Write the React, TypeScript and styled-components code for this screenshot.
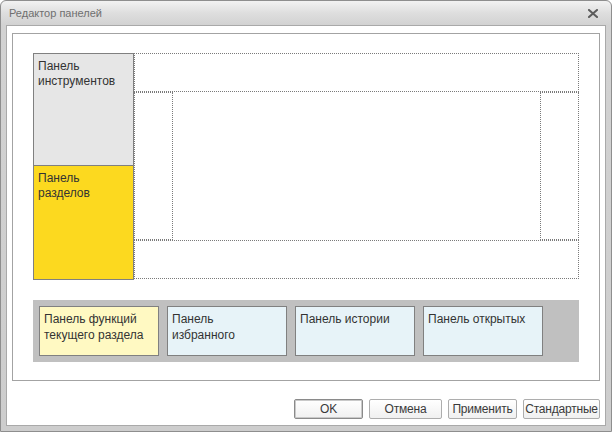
import React, { FunctionComponent } from 'react';
import styled, { createGlobalStyle } from 'styled-components';

/*
 * Styles
 */
const GlobalStyle = createGlobalStyle`
  html, body {
    margin: 0;
    padding: 0;
    background: #ffffff;
  }
  * {
    box-sizing: border-box;
  }
`;

const Window = styled.div`
  width: 612px;
  height: 432px;
  display: flex;
  flex-direction: column;
  padding: 0 5px 5px 5px;
  border: 1px solid #8e8e8e;
  border-radius: 6px 6px 0 0;
  background: linear-gradient(#f2f2f2 0px, #dedede 12px, #d2d2d2 24px, #cdcdcd 100%);
  font-family: "Liberation Sans", Arial, sans-serif;
`;

const TitleBar = styled.div`
  height: 24px;
  flex: none;
  display: flex;
  align-items: center;
  justify-content: space-between;
  padding: 0 8px 0 3px;
`;

const Title = styled.span`
  font-size: 11px;
  color: #6f6f6f;
`;

const Client = styled.div`
  flex: 1;
  display: flex;
  flex-direction: column;
  background: #ffffff;
  border: 1px solid #a9a9a9;
  padding: 7px 5px 0 5px;
`;

const EditorBox = styled.div`
  height: 348px;
  flex: none;
  border: 1px solid #a3a3a3;
  padding: 19px 20px 0 20px;
`;

const Diagram = styled.div`
  display: flex;
  height: 227px;
`;

const SideColumn = styled.div`
  width: 101px;
  flex: none;
  display: flex;
  flex-direction: column;
  border: 1px solid #808080;
`;

const SidePanel = styled.div<{ $bg: string; $size: number }>`
  height: ${(p) => p.$size}px;
  flex: none;
  background: ${(p) => p.$bg};
  padding: 5px 4px;
  font-size: 12px;
  line-height: 15px;
  color: #333333;
  & + & {
    border-top: 1px solid #808080;
    flex: 1;
  }
`;

const Area = styled.div`
  flex: 1;
  display: grid;
  grid-template-columns: 39px 1fr 39px;
  grid-template-rows: 39px 148px 39px;
`;

const Dotted = styled.div<{ $area: string }>`
  grid-area: ${(p) => p.$area};
  border: 1px dotted #7a7a7a;
`;

const Strip = styled.div`
  margin-top: 20px;
  height: 62px;
  background: #c0c0c0;
  padding: 6px;
  display: flex;
  gap: 8px;
`;

const Card = styled.div<{ $bg: string }>`
  width: 120px;
  height: 50px;
  border: 1px solid #808080;
  background: ${(p) => p.$bg};
  padding: 4px 4px;
  font-size: 12px;
  line-height: 16px;
  color: #333333;
`;

const Footer = styled.div`
  flex: 1;
  display: flex;
  justify-content: flex-end;
  align-items: flex-start;
  gap: 6px;
  padding: 18px 0 0 0;
`;

const Button = styled.button<{ $width: number; $default?: boolean }>`
  width: ${(p) => p.$width}px;
  height: 20px;
  padding: 0;
  font-family: "Liberation Sans", Arial, sans-serif;
  font-size: 12px;
  letter-spacing: -0.2px;
  color: #3a3a3a;
  background: linear-gradient(#ffffff, #f0f0f0);
  border: 1px solid ${(p) => (p.$default ? '#8a8a8a' : '#adadad')};
  box-shadow: ${(p) => (p.$default ? 'inset 0 0 0 1px #c9c9c9' : 'none')};
  border-radius: 2px;
`;

/*
 * Components
 */
const CloseIcon = () => (
  <svg width="10" height="9" viewBox="0 0 10 9">
    <path d="M1 1 L9 8 M9 1 L1 8" stroke="#5c5c5c" strokeWidth="2" strokeLinecap="square" />
  </svg>
);

const cards = [
  { bg: '#fff9c2', lines: ['Панель функций', 'текущего раздела'] },
  { bg: '#e7f3f8', lines: ['Панель', 'избранного'] },
  { bg: '#e7f3f8', lines: ['Панель истории'] },
  { bg: '#e7f3f8', lines: ['Панель открытых'] },
];

const LayoutDiagram: FunctionComponent = () => (
  <Diagram>
    <SideColumn>
      <SidePanel $bg="#e6e6e6" $size={111}>Панель<br />инструментов</SidePanel>
      <SidePanel $bg="#fcd91f" $size={114}>Панель<br />разделов</SidePanel>
    </SideColumn>
    <Area>
      <Dotted $area="1 / 1 / 2 / 4" />
      <Dotted $area="2 / 1 / 3 / 2" />
      <Dotted $area="2 / 3 / 3 / 4" />
      <Dotted $area="3 / 1 / 4 / 4" />
    </Area>
  </Diagram>
);

const App: FunctionComponent = () => (
  <>
    <GlobalStyle />
    <Window>
      <TitleBar>
        <Title>Редактор панелей</Title>
        <CloseIcon />
      </TitleBar>
      <Client>
        <EditorBox>
          <LayoutDiagram />
          <Strip>
            {cards.map((c) => (
              <Card key={c.lines.join(' ')} $bg={c.bg}>
                {c.lines.map((l, i) => (
                  <React.Fragment key={l}>{i > 0 && <br />}{l}</React.Fragment>
                ))}
              </Card>
            ))}
          </Strip>
        </EditorBox>
        <Footer>
          <Button $width={69} $default>OK</Button>
          <Button $width={73}>Отмена</Button>
          <Button $width={69}>Применить</Button>
          <Button $width={77}>Стандартные</Button>
        </Footer>
      </Client>
    </Window>
  </>
);

export default App;
